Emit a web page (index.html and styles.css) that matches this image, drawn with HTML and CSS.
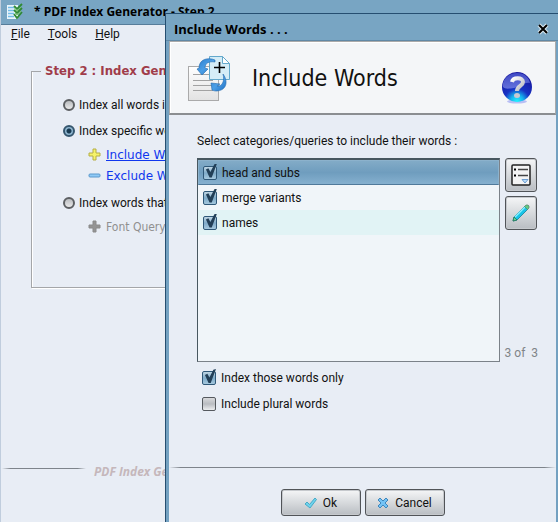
FILE: index.html
```html
<!DOCTYPE html>
<html lang="en">
<head>
<meta charset="utf-8">
<title>PDF Index Generator</title>
<link rel="stylesheet" href="styles.css">
</head>
<body>
<main class="app">
  <header class="app-title">
    <svg class="app-icon" viewBox="0 0 18 18" width="18" height="18" aria-hidden="true">
      <path d="M1 2h11v14H1z" fill="#e9f5fc"/>
      <path d="M2 4.500h6M2 7.500h6M2 10.500h6M2 13.500h6" stroke="#73bce8" stroke-width="1.500"/>
      <path d="M8 3l3 3 5-5M8 7l3 3 5-5M8 11l3 4 5-6" fill="none" stroke="#2f8a34" stroke-width="1.800"/>
      <path d="M8.500 5l2.500 3 4-4M9 10l2 2 4-4" fill="none" stroke="#7cc574"/>
    </svg>
    <h1>* PDF Index Generator - Step 2</h1>
  </header>
  <nav class="menu">
    <a href="#file"><u>F</u>ile</a>
    <a href="#tools"><u>T</u>ools</a>
    <a href="#help"><u>H</u>elp</a>
  </nav>
  <fieldset class="step">
    <legend>Step 2 : Index Generation</legend>
    <label class="choice"><input type="radio" name="mode" class="radio">Index all words in the document</label>
    <label class="choice"><input type="radio" name="mode" class="radio" checked>Index specific words</label>
    <div class="sub">
      <svg viewBox="0 0 13 13" width="13" height="13" aria-hidden="true"><path d="M5 1h3v4h4v3H8v4H5V8H1V5h4z" fill="#f6f36a" stroke="#b5ae46" stroke-linejoin="round"/></svg>
      <a href="#include" class="current">Include Words</a>
    </div>
    <div class="sub">
      <svg viewBox="0 0 13 13" width="13" height="13" aria-hidden="true"><rect x="1" y="5" width="11" height="3" rx="1" fill="#8fcaf6" stroke="#5b98cc"/></svg>
      <a href="#exclude">Exclude Words</a>
    </div>
    <label class="choice spaced"><input type="radio" name="mode" class="radio">Index words that match</label>
    <div class="sub disabled">
      <svg viewBox="0 0 13 13" width="13" height="13" aria-hidden="true"><path d="M5 1h3v4h4v3H8v4H5V8H1V5h4z" fill="#949494" stroke="#8a8a8a" stroke-linejoin="round"/></svg>
      <span>Font Query</span>
    </div>
  </fieldset>
  <footer class="brand"><span class="brand-line"></span><span class="brand-name">PDF Index Generator</span></footer>
</main>

<section class="dialog" role="dialog" aria-labelledby="dialog-title">
  <header class="dialog-title">
    <h2 id="dialog-title">Include Words . . .</h2>
    <button type="button" class="close" aria-label="Close">
      <svg viewBox="0 0 12 12" width="12" height="12" aria-hidden="true"><path d="M2 2l8 8M10 2l-8 8" stroke="#dbe8f0" stroke-width="4"/><path d="M2 2l8 8M10 2l-8 8" stroke="#000" stroke-width="2"/></svg>
    </button>
  </header>
  <div class="banner">
    <svg viewBox="0 0 46 48" width="46" height="48" aria-hidden="true">
      <defs>
        <linearGradient id="paper" x1="0" y1="0" x2="0" y2="1"><stop offset="0" stop-color="#fff"/><stop offset="1" stop-color="#e2e2e2"/></linearGradient>
        <linearGradient id="arrow" x1="0" y1="0" x2="1" y2="1"><stop offset="0" stop-color="#2a7ccc"/><stop offset="0.500" stop-color="#4c9fe6"/><stop offset="1" stop-color="#1f70c4"/></linearGradient>
      </defs>
      <rect x="2.500" y="12.500" width="30" height="34" fill="url(#paper)" stroke="#aaa"/>
      <path d="M7 20.500h20M7 26.500h20M7 31.500h20M7 36.500h20" stroke="#a2a2a2"/>
      <path d="M23.500 2.500h13l7 7v16h-20z" fill="#d5edf7" stroke="#64a9cc"/>
      <path d="M36.500 2.500v7h7z" fill="#fff" stroke="#64a9cc"/>
      <path d="M29 6C22 3 13 5 13 14l-2 1 5 6 6-6-3-1c0-5 4-7 10-6z" fill="url(#arrow)" stroke="#2569ac" stroke-width=".6"/>
      <path d="M37 20c6 8 3 17-7 17-2 0-4-1-4-1l-1-7 9 1-3 2c5 1 8-5 6-12z" fill="url(#arrow)" stroke="#2569ac" stroke-width=".6"/>
      <path d="M28 13.500h11M33.500 8v11" stroke="#000" stroke-width="1.600"/>
    </svg>
    <p class="banner-title">Include Words</p>
    <button type="button" class="help" aria-label="Help">
      <svg viewBox="0 0 32 32" width="32" height="32" aria-hidden="true">
        <defs>
          <radialGradient id="orb" cx=".5" cy=".98" r=".85"><stop offset="0" stop-color="#20f4ff"/><stop offset=".25" stop-color="#16b4ee"/><stop offset=".5" stop-color="#1733c4"/><stop offset="1" stop-color="#1818a0"/></radialGradient>
          <linearGradient id="gloss" x1="0" y1="0" x2="0" y2="1"><stop offset="0" stop-color="#4d5bd2"/><stop offset="1" stop-color="#7c88e6"/></linearGradient>
          <linearGradient id="mark" x1="0" y1="0" x2="1" y2="1"><stop offset="0" stop-color="#fff"/><stop offset="1" stop-color="#b5b5bd"/></linearGradient>
        </defs>
        <ellipse cx="16" cy="29.500" rx="10" ry="2" fill="#b9bff4"/>
        <circle cx="16" cy="15" r="15" fill="url(#orb)"/>
        <path d="M2 15C1 7 8 1 16 1s12 5 13 10c-7-1-10 4-16 5s-9 1-11-1z" fill="url(#gloss)" opacity=".75"/>
        <path d="M11 10c1-5 11-5 11 0 0 4-6 4-6 9" fill="none" stroke="url(#mark)" stroke-width="4"/>
        <ellipse cx="16" cy="23.500" rx="3" ry="2.500" fill="#c7c9d2"/>
      </svg>
    </button>
  </div>
  <form class="dialog-body">
    <p class="prompt">Select categories/queries to include their words :</p>
    <div class="picker">
      <div class="list">
        <label class="row selected"><input type="checkbox" class="check" checked>head and subs</label>
        <label class="row"><input type="checkbox" class="check" checked>merge variants</label>
        <label class="row alt"><input type="checkbox" class="check" checked>names</label>
      </div>
      <div class="tools">
        <button type="button" class="btn tool" aria-label="Selection options">
          <svg viewBox="0 0 20 22" width="20" height="22" aria-hidden="true"><rect x="1" y="1" width="18" height="20" rx="1" fill="#f4f4f4" stroke="#222" stroke-width="1.500"/><path d="M3 5.500h2M3 11.500h2" stroke="#000" stroke-width="2"/><path d="M7 5.500h10M7 11.500h10" stroke="#444" stroke-width="1.500"/><path d="M11 15.500h6l-3 3.500z" fill="#b9dcf8" stroke="#6d9dd0"/></svg>
        </button>
        <button type="button" class="btn tool" aria-label="Edit">
          <svg viewBox="0 0 18 18" width="18" height="18" aria-hidden="true"><path d="M1 17l1-4L13 2l3 3L5 16z" fill="#18c4e8" stroke="#187f98" stroke-width=".8"/><path d="M3 13L13 3" stroke="#8af1ff" stroke-width="1.500"/><path d="M12.500 2.500L14 1h2l1 1v2l-1.500 1.500z" fill="#64c984" stroke="#58826a" stroke-width=".7"/><path d="M1 17l1-4 3 3z" fill="#5fdc9b" stroke="#23684b" stroke-width=".7"/></svg>
        </button>
        <output class="count">3 of&nbsp; 3</output>
      </div>
    </div>
    <label class="option"><input type="checkbox" class="check" checked>Index those words only</label>
    <label class="option"><input type="checkbox" class="check">Include plural words</label>
  </form>
  <footer class="actions">
    <button type="button" class="btn">
      <svg viewBox="0 0 13 12" width="13" height="12" aria-hidden="true"><path d="M1 7l2-2 2.500 2.500L11 1l1.500 1.500L6 11z" fill="#6fd4ee" stroke="#47a9c6" stroke-linejoin="round"/></svg>
      Ok
    </button>
    <button type="button" class="btn">
      <svg viewBox="0 0 12 12" width="12" height="12" aria-hidden="true"><path d="M1 3l2-2 3 3 3-3 2 2-3 3 3 3-2 2-3-3-3 3-2-2 3-3z" fill="#74c3f5" stroke="#3f87bd" stroke-linejoin="round"/></svg>
      Cancel
    </button>
  </footer>
</section>
</body>
</html>
```
FILE: styles.css
```css
* { box-sizing: border-box; }

body {
  margin: 0;
  min-height: 100vh;
  position: relative;
  overflow: hidden;
  background: #e8edf5;
  color: #111;
  font: 12px/16px Roboto, "Open Sans", sans-serif;
}

h1, h2, p { margin: 0; }
button { font: inherit; color: inherit; }
svg { display: block; flex: none; }

/* Main window */
.app {
  min-height: 100vh;
  display: flex;
  flex-direction: column;
  border-left: 1px solid #c0cddd;
  white-space: nowrap;
}

.app-title {
  display: flex;
  align-items: center;
  gap: 10px;
  height: 25px;
  padding-left: 5px;
  background: #78a5c3;
  border-bottom: 1px solid #567d9a;
}

.app-title h1 {
  color: #000;
  font: 700 12px/16px "Open Sans", sans-serif;
}

.menu {
  display: flex;
  gap: 18px;
  padding: 1px 10px 0;
}

.menu a { color: #111; text-decoration: none; }

.step {
  height: 226px;
  margin: 20px 30px 0;
  padding: 12px 0 0 31px;
  border: 1px solid #a4a6a9;
  box-shadow: 1px 1px 0 #fff, inset 1px 0 0 #fff;
}

.step legend {
  margin-left: -22px;
  padding: 0 4px;
  color: #a03c4a;
  font: 700 13px/18px "DejaVu Sans Condensed", "DejaVu Sans", sans-serif;
}

.choice {
  display: flex;
  align-items: center;
  gap: 4px;
  height: 26px;
}

.spaced { margin-top: 4px; }

.radio {
  appearance: none;
  flex: none;
  width: 12px;
  height: 12px;
  margin: 0;
  border: 2px solid #5c5f62;
  border-radius: 50%;
  background: linear-gradient(#b9bcbf, #e9e9e9);
}

.radio:checked {
  border-color: #35566e;
  background: radial-gradient(circle, #173950 2px, #8fb6d0 3px);
}

.sub {
  display: flex;
  align-items: center;
  gap: 5px;
  height: 21px;
  padding-left: 25px;
  color: #1037ee;
  font: 12px/16px "DejaVu Sans", sans-serif;
}

.sub a { color: inherit; text-decoration: none; }
.sub .current { text-decoration: underline; }

.disabled {
  color: #909090;
  font-family: "DejaVu Sans Condensed", "DejaVu Sans", sans-serif;
}

.brand {
  display: flex;
  gap: 8px;
  margin-top: auto;
  padding: 0 1px 42px;
}

.brand-line {
  width: 84px;
  height: 1px;
  margin-top: 4px;
  background: linear-gradient(90deg, transparent, #7e848b 10%, #7e848b 90%, transparent);
}

.brand-name {
  color: #c5b7bb;
  font: italic 700 12px/16px "Open Sans", sans-serif;
}

/* Dialog window */
.dialog {
  position: absolute;
  inset: 14px 0 0 166px;
  display: flex;
  flex-direction: column;
  border: solid #73a1c1;
  border-width: 0 2px 0 3px;
  outline: 1px solid #254e70;
  background: #e8edf5;
}

.dialog-title {
  display: flex;
  align-items: center;
  justify-content: space-between;
  height: 27px;
  margin: 0 -2px 0 -3px;
  padding: 3px 9px 0 8px;
  background: #78a5c3;
  border-bottom: 1px solid #6088a5;
}

.dialog-title h2 {
  color: #000;
  font: 700 13px/16px "Open Sans", sans-serif;
}

.close, .help {
  padding: 0;
  border: 0;
  background: none;
}

.banner {
  display: flex;
  align-items: center;
  height: 74px;
  padding: 0 22px 0 16px;
  background: #f4f6f8;
  border: 1px solid #aaa;
  border-bottom: 2px solid #8b8e91;
  box-shadow: inset 1px 1px 0 #fff;
}

.banner-title {
  flex: 1;
  padding-left: 20px;
  font: 23px/32px "DejaVu Sans Condensed", "DejaVu Sans", sans-serif;
}

.help { margin-top: 20px; }

.dialog-body {
  flex: 1;
  display: flex;
  flex-direction: column;
  padding: 18px 18px 50px 28px;
}

.prompt { margin-bottom: 9px; }

.picker {
  flex: 1;
  display: flex;
  gap: 5px;
  margin-bottom: 3px;
}

.list {
  flex: 1;
  border: 1px solid #7b8289;
  border-top: 2px solid #485760;
  border-left-color: #485760;
  background: #f0f5f9;
}

.row {
  display: flex;
  align-items: center;
  gap: 5px;
  height: 25px;
  padding-left: 5px;
}

.row.selected {
  padding-left: 4px;
  border: 1px solid #8cb2cc;
  border-bottom-color: #4f799a;
  background: linear-gradient(#82abc7, #6f9dbe 50%, #85b0cf);
}

.row.alt { background: #e1f3f5; }

.check {
  appearance: none;
  position: relative;
  flex: none;
  width: 14px;
  height: 14px;
  margin: 0;
  border: 1px solid #55595e;
  border-radius: 2px;
  background: linear-gradient(#d8d9dc, #b9bcc1 50%, #eceef0);
}

.check:checked {
  border-color: #2f5878;
  background: linear-gradient(#c0d6e4, #7fabc9 50%, #a5c8de);
}

.check:checked::before {
  content: "";
  position: absolute;
  inset: -3px -1px 1px 1px;
  background: #223f57;
  clip-path: polygon(8% 42%, 28% 34%, 45% 60%, 78% 6%, 100% 0, 56% 100%, 38% 100%);
}

.tools {
  display: flex;
  flex-direction: column;
  gap: 4px;
}

.btn {
  display: flex;
  align-items: center;
  justify-content: center;
  gap: 6px;
  width: 80px;
  height: 27px;
  padding: 0;
  border: 1px solid #515458;
  border-radius: 3px;
  background: linear-gradient(#f5f6f7, #d7dadd 50%, #b9bdc2);
  box-shadow: inset 0 0 0 1px #c6c9cd;
}

.tool { width: 32px; height: 34px; }

.count { margin-top: auto; padding-bottom: 1px; color: #808488; }

.option {
  display: flex;
  align-items: center;
  gap: 5px;
  height: 26px;
  padding-left: 5px;
}

.actions {
  position: relative;
  display: flex;
  justify-content: center;
  gap: 4px;
  padding: 22px 0 6px;
}

.actions::before {
  content: "";
  position: absolute;
  inset: 0 0 auto;
  height: 1px;
  background: linear-gradient(90deg, transparent, #7e848b 3%, #7e848b 97%, transparent);
}
```
